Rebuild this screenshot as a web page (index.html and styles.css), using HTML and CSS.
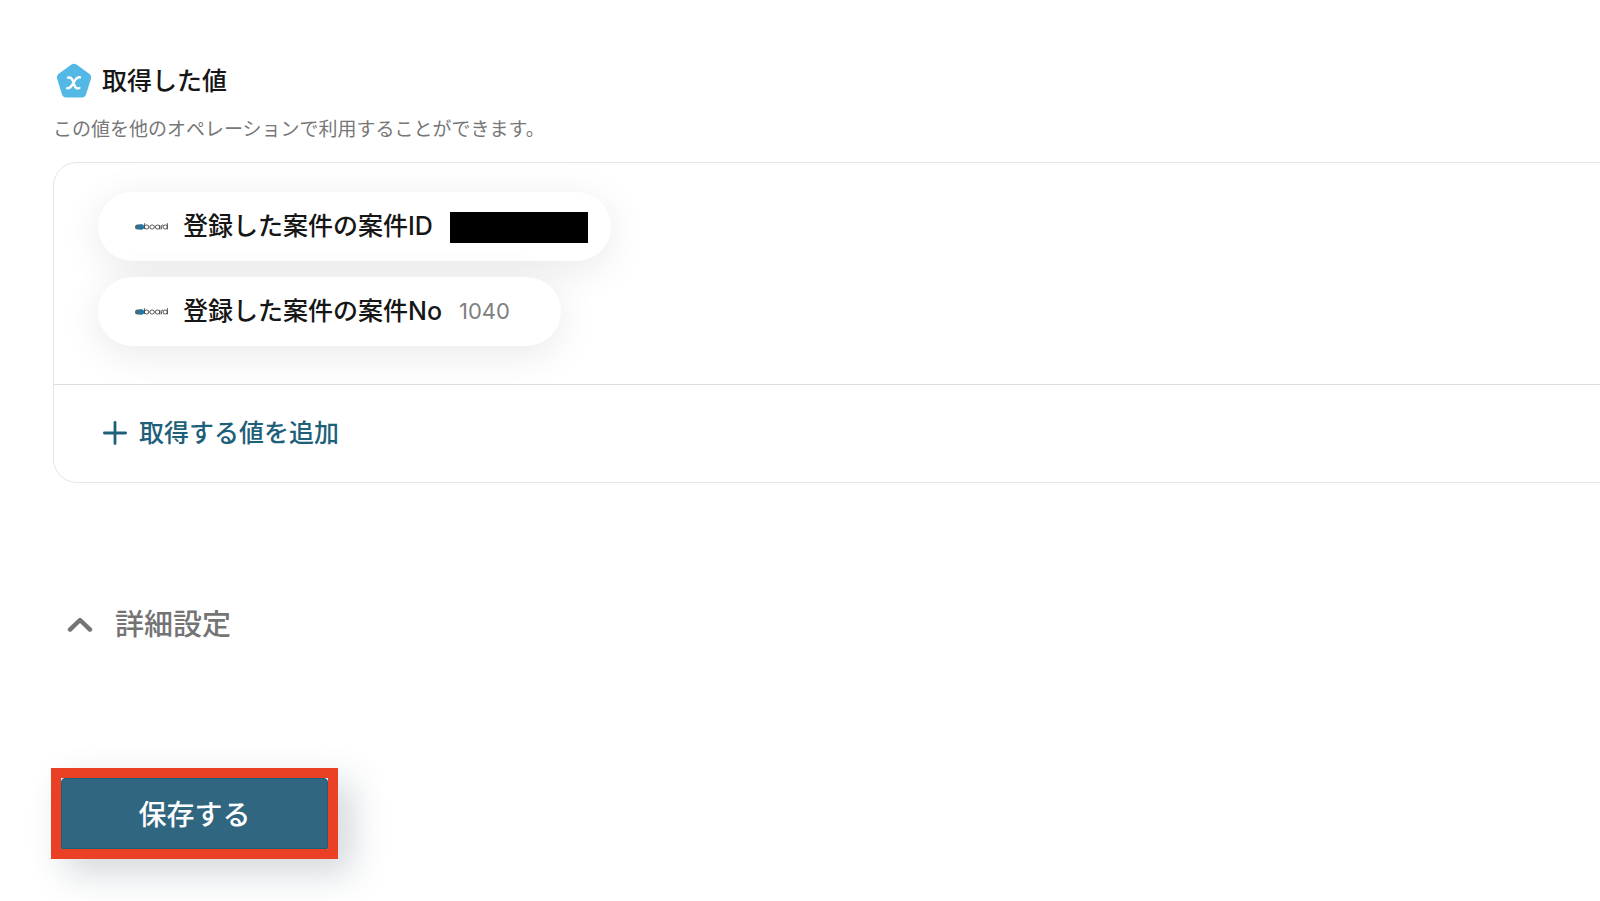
FILE: index.html
```html
<!DOCTYPE html>
<html lang="ja">
<head>
    <meta charset="UTF-8">
    <meta name="viewport" content="width=device-width, initial-scale=1.0">
    <title>取得した値</title>
    <link rel="stylesheet" href="styles.css">
</head>
<body>
    <main class="container">
        <section>
            <h1 class="title">
                <svg class="title-icon" viewBox="0 0 36 36" aria-hidden="true">
                    <path d="M15.5 1.6Q18 0 20.5 1.6L33.6 11Q35.8 12.8 35 15.4L30 31.5Q28.9 34.5 26 34.5H10Q7.1 34.5 6 31.5L1 15.4Q.2 12.8 2.4 11Z" fill="#54b8e6"/>
                    <path d="M12 14.6C14.6 13.8 15.6 14.8 16.6 17.4L18.6 22.6C19.6 25.2 21 26 23.4 25M24 14.4C21.4 13.8 20 15.6 18.2 18.6L16.6 21.4C15 24.2 13.8 25.8 11.2 25.2" fill="none" stroke="#fff" stroke-width="2.4" stroke-linecap="round"/>
                </svg>
                取得した値
            </h1>
            <p class="hint">この値を他のオペレーションで利用することができます。</p>

            <div class="card">
                <ul class="values">
                    <li class="pill">
                        <svg class="logo" viewBox="0 0 34 10" role="img" aria-label="board">
                            <use href="#board-logo"/>
                        </svg>
                        <span class="name">登録した案件の案件ID</span>
                        <span class="masked"></span>
                    </li>
                    <li class="pill pill-wide">
                        <svg class="logo" viewBox="0 0 34 10" role="img" aria-label="board">
                            <use href="#board-logo"/>
                        </svg>
                        <span class="name">登録した案件の案件No</span>
                        <span class="value">1040</span>
                    </li>
                </ul>
                <div class="card-footer">
                    <button type="button" class="add-button">
                        <svg class="plus" viewBox="0 0 24 24" aria-hidden="true">
                            <path d="M12 1.4V22.6M1.4 12H22.6" fill="none" stroke="currentColor" stroke-width="2.8" stroke-linecap="round"/>
                        </svg>
                        取得する値を追加
                    </button>
                </div>
            </div>
        </section>

        <button type="button" class="detail-toggle">
            <svg class="chevron" viewBox="0 0 26 16" aria-hidden="true">
                <path d="M3 12.6L13 3L23 12.6" fill="none" stroke="currentColor" stroke-width="4.4" stroke-linecap="round" stroke-linejoin="round"/>
            </svg>
            詳細設定
        </button>

        <div class="save-frame">
            <button type="submit" class="save-button">保存する</button>
        </div>
    </main>

    <svg class="defs" aria-hidden="true">
        <symbol id="board-logo" viewBox="0 0 34 10">
            <rect x="1" y="2.4" width="9" height="5" rx="2.5" fill="#4f6672"/>
            <circle cx="7" cy="4.9" r="2.6" fill="#1f78ad"/>
            <g fill="none" stroke="#444" stroke-width=".9">
                <path d="M10.4 1.2V7"/>
                <rect x="10.4" y="3" width="4.4" height="4" rx="2"/>
                <rect x="15.8" y="3" width="4.6" height="4" rx="2"/>
                <rect x="21.4" y="3" width="4.4" height="4" rx="2"/>
                <path d="M25.8 3V7.4M27.4 7.4V4.4Q27.4 3 29 3M33.4 1.2V7.4"/>
                <rect x="29" y="3" width="4.4" height="4" rx="2"/>
            </g>
        </symbol>
    </svg>
</body>
</html>
```
FILE: styles.css
```css
* {
    box-sizing: border-box;
}

body {
    margin: 0;
    background-color: #fff;
    color: #161616;
    font-family: Inter, "Noto Sans CJK JP", sans-serif;
    overflow-x: hidden;
}

button {
    font: inherit;
    border: none;
    background: none;
    padding: 0;
    cursor: pointer;
}

.container {
    padding: 61px 0 41px 53px;
}

.title {
    display: flex;
    align-items: center;
    gap: 10px;
    margin: 0;
    padding-left: 3px;
    font-size: 25px;
    line-height: 40px;
    font-weight: 500;
}

.title-icon {
    width: 36px;
    height: 36px;
}

.hint {
    margin: 13px 0 16px;
    font-size: 19px;
    line-height: 32px;
    font-weight: 400;
    color: #777;
}

.card {
    margin-right: -24px;
    border: 1px solid #e6e6e6;
    border-radius: 24px;
    overflow: hidden;
}

.values {
    display: flex;
    flex-direction: column;
    align-items: flex-start;
    gap: 16px;
    margin: 0;
    padding: 29px 44px 38px;
    list-style: none;
    border-bottom: 1px solid #dedede;
}

.pill {
    display: flex;
    align-items: center;
    height: 69px;
    padding: 0 23px 0 36px;
    border-radius: 35px;
    background-color: #fff;
    box-shadow: 0 8px 40px rgba(0, 0, 0, 0.09);
}

.pill-wide {
    padding-right: 51px;
}

.logo {
    width: 34px;
    height: 10px;
    margin-right: 15px;
}

.name {
    padding-bottom: 2px;
    font-size: 25px;
    line-height: 32px;
    font-weight: 500;
}

.masked {
    width: 138px;
    height: 31px;
    margin: 2px 0 0 17px;
    background-color: #000;
}

.value {
    padding-bottom: 2px;
    margin-left: 17px;
    font-size: 22px;
    color: #808080;
}

.card-footer {
    padding: 28px 49px 29px;
}

.add-button {
    display: flex;
    align-items: center;
    gap: 12px;
    font-size: 25px;
    line-height: 40px;
    font-weight: 500;
    color: #1e607a;
}

.plus {
    width: 24px;
    height: 24px;
}

.detail-toggle {
    display: flex;
    align-items: center;
    gap: 22px;
    margin: 120px 0 0 14px;
    font-size: 29px;
    line-height: 44px;
    font-weight: 500;
    color: #747474;
}

.chevron {
    width: 26px;
    height: 16px;
}

.save-frame {
    width: 287px;
    margin: 121px 0 0 -2px;
    border: 10px solid #ea4025;
    background-color: #fff;
    box-shadow: 14px 14px 36px rgba(30, 60, 75, 0.2);
}

.save-button {
    display: block;
    width: 100%;
    height: 71px;
    padding-bottom: 2px;
    border: 1px solid #1a6079;
    border-radius: 4px 4px 0 0;
    background-color: #30667f;
    color: #fff;
    font-size: 28px;
    font-weight: 500;
}

.defs {
    display: none;
}
```
